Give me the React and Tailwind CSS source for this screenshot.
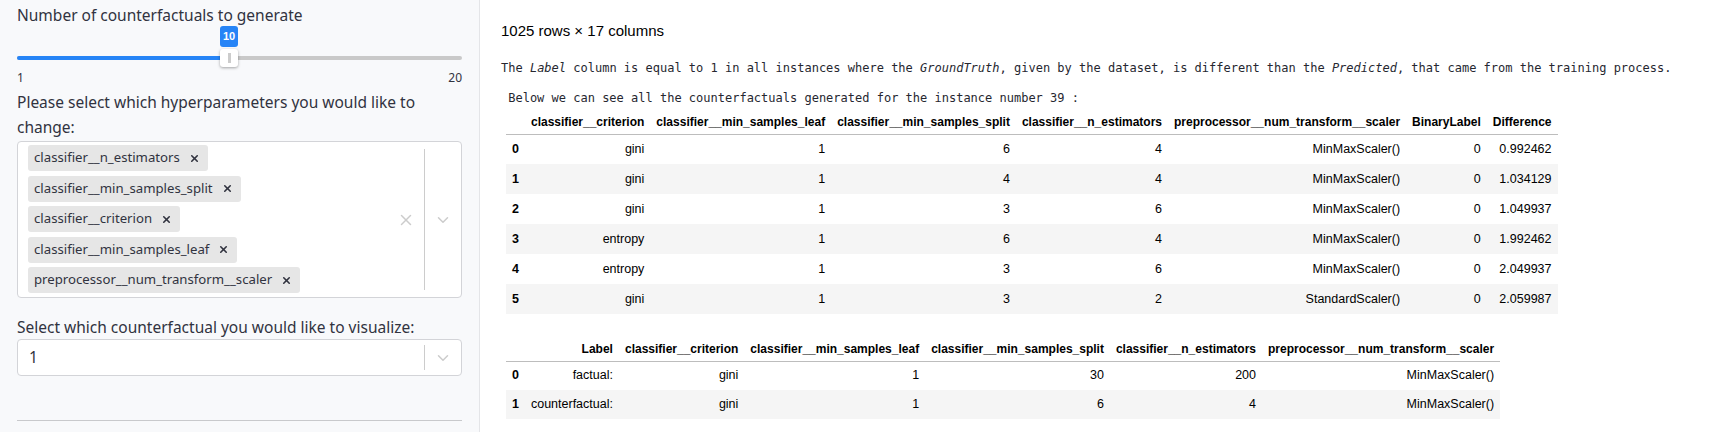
import { ChevronDown, X } from 'lucide-react';

const hyperparams = [
  'classifier__n_estimators',
  'classifier__min_samples_split',
  'classifier__criterion',
  'classifier__min_samples_leaf',
  'preprocessor__num_transform__scaler',
];

const cfColumns = [
  'classifier__criterion',
  'classifier__min_samples_leaf',
  'classifier__min_samples_split',
  'classifier__n_estimators',
  'preprocessor__num_transform__scaler',
  'BinaryLabel',
  'Difference',
];

const cfRows = [
  ['gini', 1, 6, 4, 'MinMaxScaler()', 0, '0.992462'],
  ['gini', 1, 4, 4, 'MinMaxScaler()', 0, '1.034129'],
  ['gini', 1, 3, 6, 'MinMaxScaler()', 0, '1.049937'],
  ['entropy', 1, 6, 4, 'MinMaxScaler()', 0, '1.992462'],
  ['entropy', 1, 3, 6, 'MinMaxScaler()', 0, '2.049937'],
  ['gini', 1, 3, 2, 'StandardScaler()', 0, '2.059987'],
];

const cmpColumns = [
  'Label',
  'classifier__criterion',
  'classifier__min_samples_leaf',
  'classifier__min_samples_split',
  'classifier__n_estimators',
  'preprocessor__num_transform__scaler',
];

const cmpRows = [
  ['factual:', 'gini', 1, 30, 200, 'MinMaxScaler()'],
  ['counterfactual:', 'gini', 1, 6, 4, 'MinMaxScaler()'],
];

const sans = "font-['Noto_Sans',sans-serif]";
const narrow = "font-['Liberation_Sans_Narrow','Liberation_Sans',Arial,sans-serif]";

function DataFrame({ columns, rows, rowH = 'h-[30px]' }) {
  return (
    <table className={`${narrow} ml-[5px] border-collapse text-black`}>
      <thead>
        <tr className="h-[29px] border-b border-[#bdbdbd]">
          <th className="px-[6px]"></th>
          {columns.map((c) => (
            <th key={c} className="px-[6px] pb-[3px] pt-0 align-bottom text-right text-[12px] font-bold">
              {c}
            </th>
          ))}
        </tr>
      </thead>
      <tbody>
        {rows.map((r, i) => (
          <tr key={i} className={`${rowH} ${i % 2 === 1 ? 'bg-[#f5f5f5]' : 'bg-white'}`}>
            <th className="px-[6px] text-left text-[12.5px] font-bold">{i}</th>
            {r.map((v, j) => (
              <td key={j} className="px-[6px] text-right text-[12.5px]">
                {v}
              </td>
            ))}
          </tr>
        ))}
      </tbody>
    </table>
  );
}

function Slider() {
  return (
    <div className="relative h-[42px]">
      <div className="absolute left-[203px] top-0 flex h-[21px] w-[18px] items-center justify-center rounded-[3px] bg-[#2684f6] text-[11px] font-bold text-white font-['Liberation_Sans',sans-serif]">
        10
      </div>
      <div className="absolute left-0 right-0 top-[30px] h-[4px] rounded-full bg-[#c9c9c9]">
        <div className="h-full w-[47.4%] rounded-full bg-[#2684f6]"></div>
      </div>
      <div className="absolute left-[203px] top-[23px] flex h-[18px] w-[18px] items-center justify-center rounded-[3px] bg-white shadow-[0_1px_3px_rgba(0,0,0,0.35)]">
        <div className="h-[10px] w-[3px] bg-[#cccccc]"></div>
      </div>
    </div>
  );
}

export default function App() {
  return (
    <div className="flex h-[432px] w-full overflow-hidden bg-white">
      <aside className={`${sans} w-[480px] shrink-0 border-r border-[#e4e5e8] bg-[#f8f9fb] px-[17px] text-[#31333f]`}>
        <div className="pt-[4px] text-[15.5px] leading-[22px]">Number of counterfactuals to generate</div>
        <Slider />
        <div className="mt-[2px] flex justify-between text-[12px] leading-[16px]">
          <span>1</span>
          <span>20</span>
        </div>
        <div className="mt-[4px] text-[15.5px] leading-[25px]">
          Please select which hyperparameters you would like to
          <br />
          change:
        </div>
        <div className="mt-[1px] flex h-[157px] rounded-[4px] border border-[#d3d4d8] bg-white">
          <div className="flex flex-1 flex-col items-start gap-[4.5px] pl-[10px] pt-[3px]">
            {hyperparams.map((h) => (
              <div key={h} className="flex h-[26px] items-center gap-[9px] rounded-[3px] bg-[#e6e6e6] pl-[6px] pr-[8px] text-[13.2px]">
                <span>{h}</span>
                <X size={11} strokeWidth={3.5} className="text-[#31333f]" />
              </div>
            ))}
          </div>
          <div className="flex items-center">
            <X size={18} strokeWidth={2} className="mr-[9px] text-[#cccccc]" />
            <div className="h-[141px] w-px bg-[#cccccc]"></div>
            <ChevronDown size={18} strokeWidth={2} className="mx-[9px] text-[#cccccc]" />
          </div>
        </div>
        <div className="mt-[17px] text-[15.5px] leading-[24px]">
          Select which counterfactual you would like to visualize:
        </div>
        <div className="flex h-[37px] items-center rounded-[4px] border border-[#d3d4d8] bg-white">
          <span className="flex-1 pl-[11px] text-[15.5px]">1</span>
          <div className="h-[25px] w-px bg-[#cccccc]"></div>
          <ChevronDown size={18} strokeWidth={2} className="mx-[9px] text-[#cccccc]" />
        </div>
        <div className="mt-[44px] border-t border-[#c8c9cc]"></div>
      </aside>

      <main className="flex-1 pl-[21px] text-[#262730]">
        <div className={`${narrow} pt-[22px] text-[15px] leading-[17px] text-black`}>1025 rows × 17 columns</div>
        <p className="mt-[22px] font-['DejaVu_Sans_Mono',monospace] text-[12px] leading-[15px] text-[#262730]">
          The <i>Label</i> column is equal to 1 in all instances where the <i>GroundTruth</i>, given by the dataset, is
          different than the <i>Predicted</i>, that came from the training process.
        </p>
        <p className="mt-[15px] whitespace-pre font-['DejaVu_Sans_Mono',monospace] text-[12px] leading-[15px] text-[#262730]">
          {' Below we can see all the counterfactuals generated for the instance number 39 :'}
        </p>
        <div className="-mt-[1px]">
          <DataFrame columns={cfColumns} rows={cfRows} />
        </div>
        <div className="mt-[18px]">
          <DataFrame columns={cmpColumns} rows={cmpRows} rowH="h-[29px]" />
        </div>
      </main>
    </div>
  );
}
